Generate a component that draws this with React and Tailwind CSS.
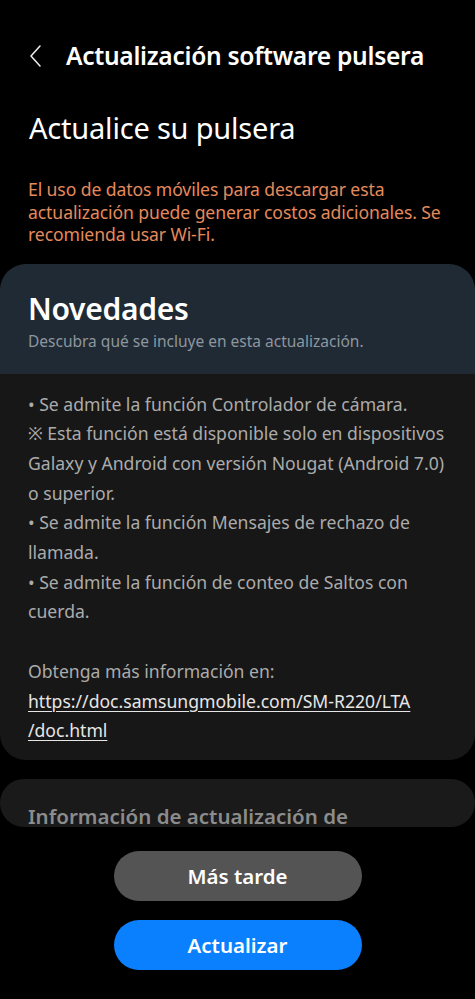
export default function App() {
  const font = { fontFamily: '"Noto Sans", "Liberation Sans", sans-serif' }
  return (
    <div className="w-[475px] h-[999px] bg-black text-white overflow-hidden flex flex-col [font-family:'Noto_Sans',sans-serif]">
      {/* cabecera */}
      <div className="flex items-center h-[48px] mt-[32px] pl-[28px]">
        <svg width="16" height="24" viewBox="0 0 16 24" className="shrink-0">
          <path d="M12 2 L3 12 L12 22" fill="none" stroke="#e8e8e8" strokeWidth="1.6" strokeLinecap="round" strokeLinejoin="round" />
        </svg>
        <h1 className="ml-[22px] text-[24.6px] font-semibold tracking-[-0.3px] leading-none">Actualización software pulsera</h1>
      </div>

      <div className="px-[29px] mt-[33px] text-[29px] leading-none tracking-[-0.2px]">Actualice su pulsera</div>

      <p className="px-[28px] mt-[36px] text-[17.6px] leading-[22.5px] text-[#e58a5c] tracking-[-0.1px]">
        El uso de datos móviles para descargar esta actualización puede generar costos adicionales. Se recomienda usar Wi-Fi.
      </p>

      {/* Novedades */}
      <div className="mt-[18px] rounded-[26px] overflow-hidden">
        <div className="bg-[#1f2a35] px-[28px] pt-[27px] pb-[24px]">
          <div className="text-[30px] font-semibold leading-[36px] tracking-[-0.3px]">Novedades</div>
          <div className="mt-[5px] text-[15.5px] leading-[18px] text-[#8e969e]">Descubra qué se incluye en esta actualización.</div>
        </div>
        <div className="bg-[#171717] px-[28px] pt-[16px] pb-[14px] text-[17.6px] leading-[29.7px] text-[#ababab]">
          <div>• Se admite la función Controlador de cámara.</div>
          <div>※ Esta función está disponible solo en dispositivos Galaxy y Android con versión Nougat (Android 7.0) o superior.</div>
          <div>• Se admite la función Mensajes de rechazo de llamada.</div>
          <div>• Se admite la función de conteo de Saltos con cuerda.</div>
          <div className="h-[29.7px]" />
          <div>Obtenga más información en:</div>
          <div className="text-[#e6e6e6] underline underline-offset-[3px] decoration-1">https://doc.samsungmobile.com/SM-R220/LTA<br />/doc.html</div>
        </div>
      </div>

      <div className="mt-[19px] h-[48px] rounded-[26px] bg-[#1a1a1a] overflow-hidden px-[28px] pt-[23px]">
        <div className="text-[20.5px] font-semibold leading-[28px] text-[#8c8c8c]">Información de actualización de</div>
      </div>

      {/* botones */}
      <div className="flex flex-col items-center mt-[24px] gap-[19px]">
        <button className="w-[248px] h-[50px] rounded-full bg-[#545454] text-[20.5px] font-semibold text-white" style={font}>Más tarde</button>
        <button className="w-[248px] h-[50px] rounded-full bg-[#0a80fe] text-[20.5px] font-semibold text-white" style={font}>Actualizar</button>
      </div>
    </div>
  )
}
